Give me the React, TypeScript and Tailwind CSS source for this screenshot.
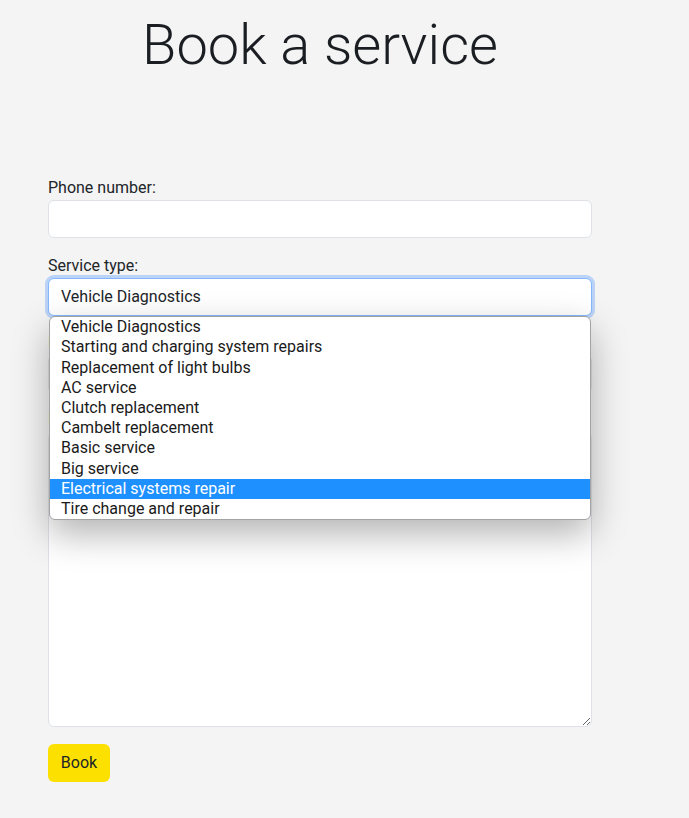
const services = [
  "Vehicle Diagnostics",
  "Starting and charging system repairs",
  "Replacement of light bulbs",
  "AC service",
  "Clutch replacement",
  "Cambelt replacement",
  "Basic service",
  "Big service",
  "Electrical systems repair",
  "Tire change and repair",
];

export default function App() {
  const highlighted = "Electrical systems repair";

  return (
    <main
      className="min-h-[818px] bg-[#f4f4f4] text-[#212529]"
      style={{ fontFamily: "Roboto, 'Noto Sans', sans-serif" }}
    >
      <div className="ml-[48px] w-[544px] pt-[12px]">
        <h1 className="text-center text-[56px] font-light leading-[1.2] text-[#1a1d21]">Book a service</h1>

        <form className="mt-[97px] flex flex-col">
          <label className="text-base leading-6">Phone number:</label>
          <input
            type="tel"
            className="h-[38px] w-full rounded-[6px] border border-[#dee2e6] bg-white px-3 outline-none"
          />

          <label className="mt-[16px] text-base leading-6">Service type:</label>
          <div className="relative">
            <div className="flex h-[38px] w-full items-center rounded-[6px] border border-[#86b7fe] bg-white px-3 shadow-[0_0_0_3px_rgba(13,110,253,0.25)]">
              Vehicle Diagnostics
            </div>

            {/* open native-style dropdown */}
            <ul className="absolute left-[1px] right-[1px] top-full z-10 overflow-hidden rounded-[6px] border border-[#a3a3a3] bg-white shadow-[0_14px_36px_rgba(0,0,0,0.3)]">
              {services.map((s) => (
                <li
                  key={s}
                  className={
                    s === highlighted
                      ? "h-[20.2px] bg-[#1e90ff] pl-[11px] text-base leading-[20px] text-white"
                      : "h-[20.2px] pl-[11px] text-base leading-[20px] text-[#1a1a1a]"
                  }
                >
                  {s}
                </li>
              ))}
            </ul>
          </div>

          <label className="mt-[15px] text-base leading-6 text-[#8a5a2b]">Date:</label>
          <input
            type="text"
            className="h-[38px] w-full rounded-[6px] border border-[#dee2e6] bg-white px-3 outline-none"
          />

          <label className="mt-[15px] text-base leading-6">Message:</label>
          <textarea className="h-[295px] w-full rounded-[6px] border border-[#dee2e6] bg-white px-3 py-2 outline-none" />

          <div className="mt-[17px]">
            <button
              type="button"
              className="h-[38px] w-[62px] rounded-[6px] bg-[#fce000] text-base text-[#212529]"
            >
              Book
            </button>
          </div>
        </form>
      </div>
    </main>
  );
}
